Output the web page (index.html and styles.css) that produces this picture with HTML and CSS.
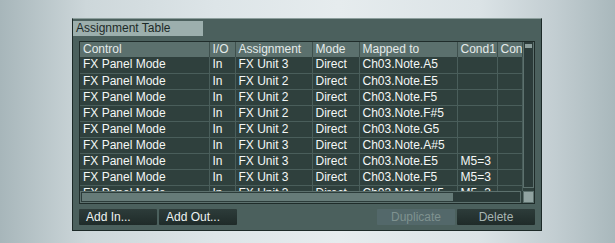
FILE: index.html
```
<!DOCTYPE html>
<html lang="en">
<head>
	<meta charset="UTF-8">
	<title>Assignment Table</title>
	<link rel="stylesheet" href="styles.css">
</head>
<body>
	<div class="panel">
		<div class="tabbar">
			<div class="tab">Assignment Table</div>
		</div>
		<div class="frame">
			<div class="view">
				<table class="grid">
					<colgroup>
						<col style="width:129px">
						<col style="width:26px">
						<col style="width:77px">
						<col style="width:47px">
						<col style="width:98px">
						<col style="width:40px">
						<col style="width:25px">
					</colgroup>
					<thead>
						<tr>
							<th>Control</th><th>I/O</th><th>Assignment</th><th>Mode</th><th>Mapped to</th><th>Cond1</th><th>Con</th>
						</tr>
					</thead>
					<tbody>
						<tr><td>FX Panel Mode</td><td>In</td><td>FX Unit 3</td><td>Direct</td><td>Ch03.Note.A5</td><td></td><td></td></tr>
						<tr><td>FX Panel Mode</td><td>In</td><td>FX Unit 2</td><td>Direct</td><td>Ch03.Note.E5</td><td></td><td></td></tr>
						<tr><td>FX Panel Mode</td><td>In</td><td>FX Unit 2</td><td>Direct</td><td>Ch03.Note.F5</td><td></td><td></td></tr>
						<tr><td>FX Panel Mode</td><td>In</td><td>FX Unit 2</td><td>Direct</td><td>Ch03.Note.F#5</td><td></td><td></td></tr>
						<tr><td>FX Panel Mode</td><td>In</td><td>FX Unit 2</td><td>Direct</td><td>Ch03.Note.G5</td><td></td><td></td></tr>
						<tr><td>FX Panel Mode</td><td>In</td><td>FX Unit 3</td><td>Direct</td><td>Ch03.Note.A#5</td><td></td><td></td></tr>
						<tr><td>FX Panel Mode</td><td>In</td><td>FX Unit 3</td><td>Direct</td><td>Ch03.Note.E5</td><td>M5=3</td><td></td></tr>
						<tr><td>FX Panel Mode</td><td>In</td><td>FX Unit 3</td><td>Direct</td><td>Ch03.Note.F5</td><td>M5=3</td><td></td></tr>
						<tr><td>FX Panel Mode</td><td>In</td><td>FX Unit 3</td><td>Direct</td><td>Ch03.Note.F#5</td><td>M5=3</td><td></td></tr>
					</tbody>
				</table>
			</div>
			<div class="vscroll"><span class="vthumb"></span></div>
			<div class="hscroll"><span class="hthumb"></span></div>
			<div class="corner"></div>
		</div>
		<div class="buttons">
			<span class="btn left">Add In...</span>
			<span class="btn left">Add Out...</span>
			<span class="spacer"></span>
			<span class="btn off">Duplicate</span>
			<span class="btn dim">Delete</span>
		</div>
	</div>
</body>
</html>
```
FILE: styles.css
```
*{
	margin: 0;
	padding: 0;
	box-sizing: border-box;
}
body{
	width: 615px;
	height: 243px;
	overflow: hidden;
	padding: 18px 0 0 72px;
	font-family: "Liberation Sans", Arial, sans-serif;
	font-size: 12px;
	background: linear-gradient(90deg, #a7b6ba 0%, #cdd7da 14%, #dde5e8 35%, #e6ecee 55%, #dbe3e6 78%, #c3ced2 90%, #a9b8bc 100%);
}
.panel{
	width: 470px;
	height: 213px;
	background: #4b605d;
	border: 1px solid #1c2927;
	border-top-color: #8d9f9d;
	padding: 2px 5px 0 6px;
}
.tabbar{
	height: 15px;
	margin-left: -6px;
}
.tab{
	width: 130px;
	height: 15px;
	background: #9cafad;
	color: #1c2a28;
	line-height: 15px;
	padding-left: 3px;
}
.frame{
	margin-top: 5px;
	width: 456px;
	display: grid;
	grid-template-columns: 443px 11px;
	grid-template-rows: 149px 12px;
	border: 1px solid #1f2c2a;
	background: #2f403d;
}
.view{
	overflow: hidden;
}
.grid{
	table-layout: fixed;
	border-collapse: collapse;
	width: 442px;
	color: #f4f7f6;
}
.grid th{
	height: 15px;
	background: #5b706d;
	color: #e4ebea;
	font-weight: normal;
	text-align: left;
	padding: 0 3px;
	border-right: 1px solid #3e504d;
	white-space: nowrap;
	overflow: hidden;
	line-height: 15px;
}
.grid td{
	height: 16px;
	padding: 0 3px;
	border-right: 1px solid #4a5e5b;
	border-bottom: 1px solid #4a5e5b;
	white-space: nowrap;
	overflow: hidden;
	line-height: 15px;
}
.vscroll{
	border: 1px solid #5d716e;
	border-top: none;
	margin-bottom: 3px;
	background: #2c3c3a;
	padding: 2px 1px 0;
}
.vthumb{
	display: block;
	height: 4px;
	background: #8b9d9b;
}
.hscroll{
	background: #2c3c3a;
	border: 1px solid #5d716e;
	margin-right: 2px;
	padding: 1px;
}
.hthumb{
	display: block;
	width: 371px;
	height: 100%;
	background: #667b78;
}
.corner{
	background: #91a3a1;
	border: 1px solid #5d716e;
}
.buttons{
	display: flex;
	gap: 2px;
	margin-top: 5px;
	width: 456px;
}
.spacer{
	flex: 1;
}
.btn{
	width: 78px;
	height: 16px;
	line-height: 16px;
	text-align: center;
	background: linear-gradient(#2d3c3a, #1f2b29);
	color: #a7b5b3;
	border-radius: 1px;
}
.btn.left{
	text-align: left;
	padding-left: 7px;
	color: #eef3f2;
}
.btn.off{
	background: #53686a;
	color: #7f9290;
}
```
